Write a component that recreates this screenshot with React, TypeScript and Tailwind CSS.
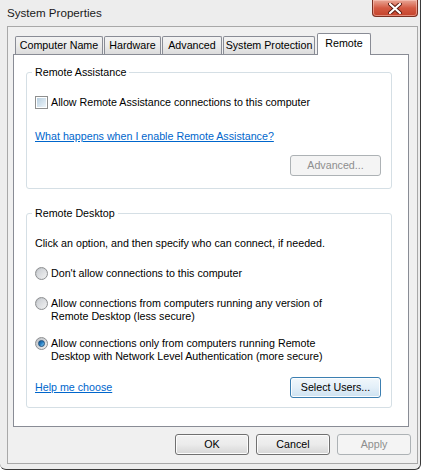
import React from 'react';

const font = "font-['Liberation_Sans',Arial,sans-serif]";

function Button({
  label,
  width,
  disabled,
  hot,
}: {
  label: string;
  width: string;
  disabled?: boolean;
  hot?: boolean;
}) {
  const base = `${width} h-[21px] rounded-[3px] border flex items-center justify-center leading-[13px]`;
  if (disabled) {
    return (
      <div className={`${base} border-[#adb2b5] bg-[#f4f4f4] text-[#8e8e8e]`}>{label}</div>
    );
  }
  if (hot) {
    return (
      <div
        className={`${base} border-[#3c7fb1] bg-gradient-to-b from-[#f2f8fc] via-[#e3eff8] to-[#cde2f1] text-black shadow-[inset_0_0_0_1px_#fcfdfe]`}
      >
        {label}
      </div>
    );
  }
  return (
    <div
      className={`${base} border-[#707070] bg-gradient-to-b from-[#f2f2f2] via-[#ebebeb] to-[#d6d6d6] text-black shadow-[inset_0_0_0_1px_#fcfcfc]`}
    >
      {label}
    </div>
  );
}

function Radio({ checked }: { checked?: boolean }) {
  return (
    <div className="w-[13px] h-[13px] shrink-0 rounded-full border border-[#8d8f91] bg-gradient-to-br from-[#b9bdc2] to-[#f3f3f3] flex items-center justify-center">
      {checked ? (
        <div className="w-[7px] h-[7px] rounded-full bg-gradient-to-br from-[#0d4f8f] via-[#2a84c8] to-[#8dd2f5] border border-[#1c4f7c]" />
      ) : (
        <div className="w-[9px] h-[9px] rounded-full bg-gradient-to-br from-[#c9cdd2] to-[#f0f0f0]" />
      )}
    </div>
  );
}

function Group({
  title,
  height,
  className,
  children,
}: {
  title: string;
  height: string;
  className?: string;
  children: React.ReactNode;
}) {
  return (
    <div className={`relative ml-[12px] w-[366px] ${height} rounded-[3px] border border-[#d5dfe5] ${className ?? ''}`}>
      <div className="absolute left-[5px] top-[-7px] px-[3px] bg-white leading-[13px]">{title}</div>
      <div className="pl-[8px] pr-[10px]">{children}</div>
    </div>
  );
}

export default function App() {
  const tabs = [
    { label: 'Computer Name', w: 'w-[88px]', ml: '' },
    { label: 'Hardware', w: 'w-[57px]', ml: 'ml-[1px]' },
    { label: 'Advanced', w: 'w-[60px]', ml: 'ml-[1px]' },
    { label: 'System Protection', w: 'w-[92px]', ml: 'ml-[1px]' },
  ];

  return (
    <div className={`w-[425px] h-[473px] bg-white overflow-hidden ${font} text-[10.7px] text-black`}>
      <div className="relative w-[421px] h-[470px] bg-[#ededed] border-r border-b border-[#3a3a3a] rounded-b-[6px]">
        {/* Title bar */}
        <div className="h-[26px] pl-[7px] pt-[6px] text-[11.6px] leading-[13px] text-[#1a1a1a]">System Properties</div>
        <div className="absolute right-[2px] top-0 w-[46px] h-[17px] rounded-b-[4px] border border-t-0 border-[#7b3022] bg-gradient-to-b from-[#e8a696] via-[#d45a43] to-[#c4432b] flex items-center justify-center shadow-[inset_0_0_0_1px_rgba(255,210,200,0.5)]">
          <svg width="14" height="11" viewBox="0 0 14 11">
            <path d="M2 1 L12 10 M12 1 L2 10" stroke="#5a1a10" strokeWidth="4" strokeLinecap="round" />
            <path d="M2 1 L12 10 M12 1 L2 10" stroke="#ffffff" strokeWidth="2.2" strokeLinecap="round" />
          </svg>
        </div>

        {/* Client area */}
        <div className="ml-[7px] w-[411px] h-[438px] border border-[#a8a8a8] bg-[#f0f0f0]">
          {/* Tabs */}
          <div className="relative z-10 mt-[6px] mb-[-1px] h-[22px] pl-[7px] flex items-end">
            {tabs.map((t) => (
              <div
                key={t.label}
                className={`${t.w} ${t.ml} mb-[1px] h-[18px] rounded-t-[2px] border border-b-0 border-[#898c95] bg-gradient-to-b from-[#f3f3f3] via-[#ebebeb] to-[#dcdcdc] flex items-center justify-center leading-[13px]`}
              >
                {t.label}
              </div>
            ))}
            <div className="ml-[2px] w-[54px] h-[22px] rounded-t-[2px] border border-b-0 border-[#898c95] bg-white flex justify-center pt-[3px] leading-[13px]">
              Remote
            </div>
          </div>

          {/* Panel */}
          <div className="relative z-0 ml-[5px] w-[396px] h-[373px] border border-[#898c95] bg-white">
            <Group title="Remote Assistance" height="h-[117px]" className="mt-[17px]">
              <div className="pt-[23px] flex items-center gap-[3px] leading-[13px]">
                <div className="w-[13px] h-[13px] shrink-0 border border-[#8e8f8f] bg-white p-[1px]">
                  <div className="w-full h-full bg-gradient-to-br from-[#b8cfe0] to-[#eef5fa]" />
                </div>
                <span>Allow Remote Assistance connections to this computer</span>
              </div>
              <div className="mt-[21px] leading-[13px] text-[#0066cc] underline">
                What happens when I enable Remote Assistance?
              </div>
              <div className="mt-[12px] flex justify-end">
                <Button label="Advanced..." width="w-[91px]" disabled />
              </div>
            </Group>

            <Group title="Remote Desktop" height="h-[195px]" className="mt-[24px]">
              <div className="pt-[23px] leading-[13px]">Click an option, and then specify who can connect, if needed.</div>
              <div className="mt-[17px] flex items-start gap-[3px] leading-[13px]">
                <Radio />
                <span>Don&apos;t allow connections to this computer</span>
              </div>
              <div className="mt-[17px] flex items-start gap-[3px] leading-[13px]">
                <Radio />
                <span>
                  Allow connections from computers running any version of
                  <br />
                  Remote Desktop (less secure)
                </span>
              </div>
              <div className="mt-[14px] flex items-start gap-[3px] leading-[13px]">
                <Radio checked />
                <span>
                  Allow connections only from computers running Remote
                  <br />
                  Desktop with Network Level Authentication (more secure)
                </span>
              </div>
              <div className="mt-[14px] flex items-center justify-between">
                <span className="leading-[13px] text-[#0066cc] underline">Help me choose</span>
                <Button label="Select Users..." width="w-[91px]" hot />
              </div>
            </Group>
          </div>

          {/* Dialog buttons */}
          <div className="mt-[7px] pr-[6px] flex justify-end gap-[7px]">
            <Button label="OK" width="w-[74px]" />
            <Button label="Cancel" width="w-[74px]" />
            <Button label="Apply" width="w-[74px]" disabled />
          </div>
        </div>
      </div>
    </div>
  );
}
